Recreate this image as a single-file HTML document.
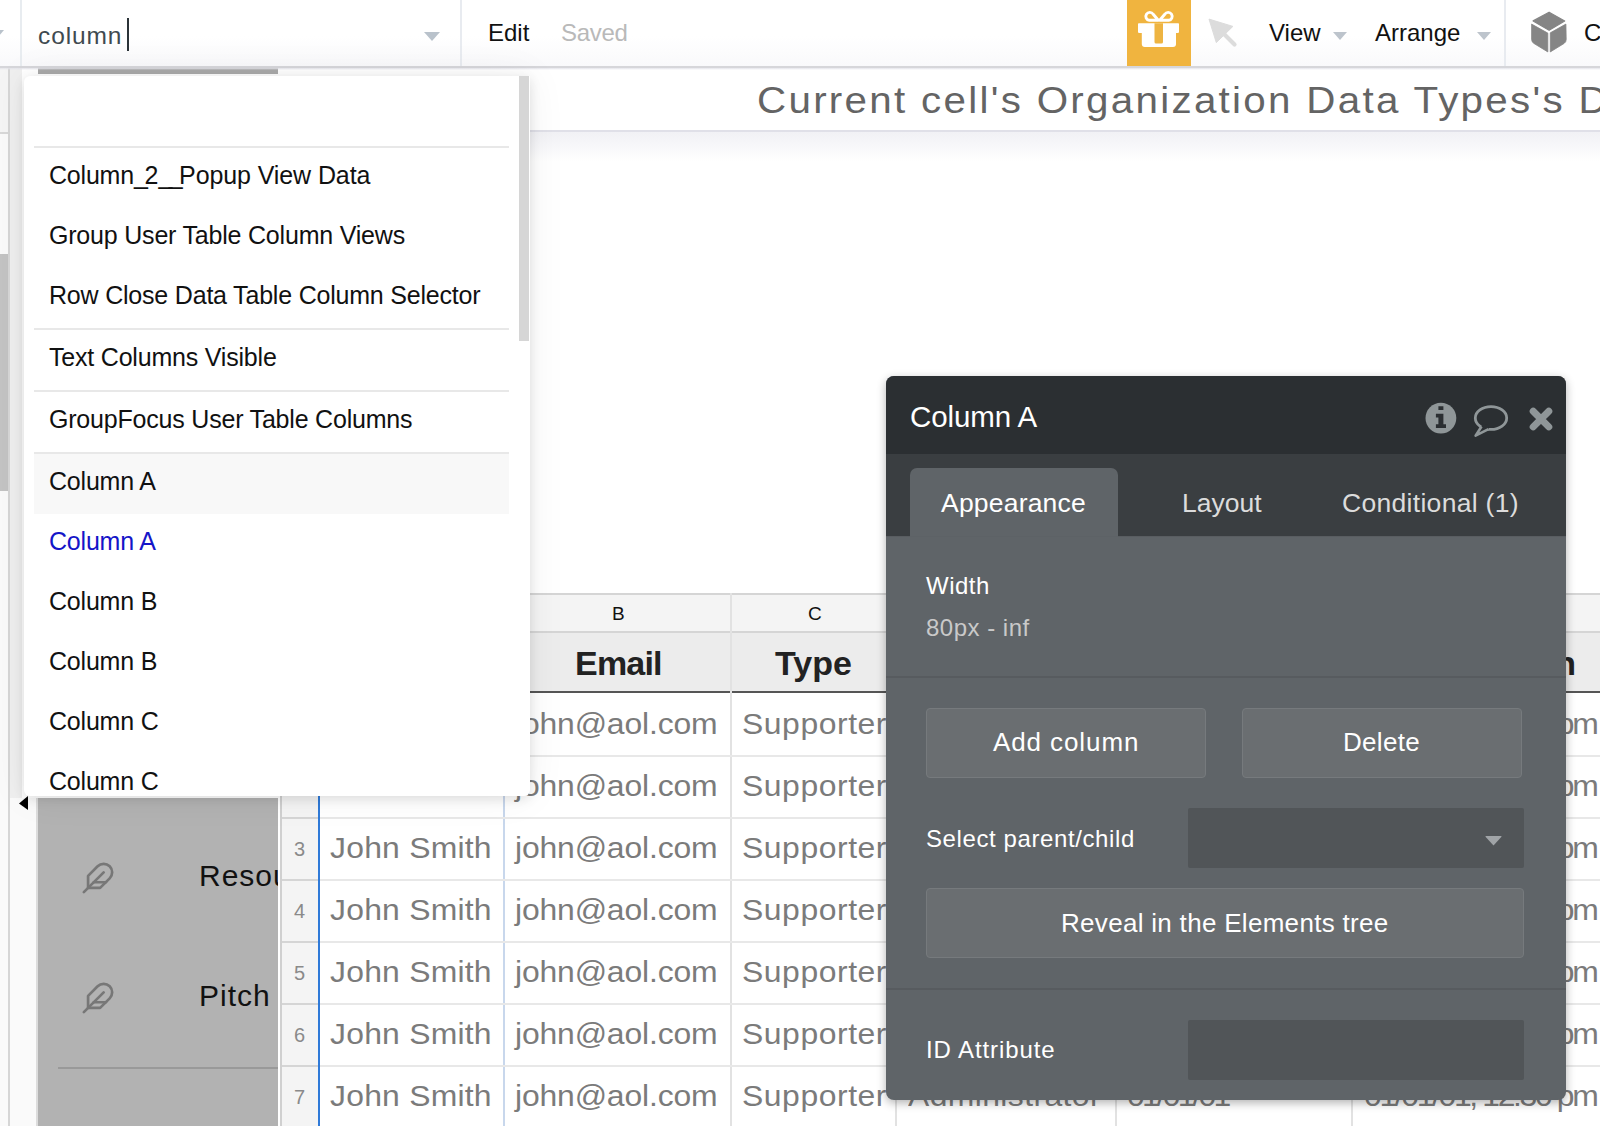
<!DOCTYPE html>
<html><head><meta charset="utf-8">
<style>
*{box-sizing:border-box;margin:0;padding:0}
html,body{width:1600px;height:1126px;overflow:hidden;background:#fff;font-family:"Liberation Sans",sans-serif}
.a{position:absolute}
.t{position:absolute;white-space:nowrap;line-height:1}
.dd .t{font-size:25px;color:#111;letter-spacing:-0.2px}
.sep{position:absolute;left:10px;width:475px;height:2px;background:#e8e8e8}
.row{position:absolute;left:280px;width:1320px;height:62px}
.cell{position:absolute;top:0;height:62px}
.rt{position:absolute;white-space:nowrap;line-height:1;font-size:29px;color:#7b7b7b;transform:scaleX(1.1);transform-origin:0 0}
.btn{position:absolute;background:#6a6e71;border:1px solid #767a7d;border-radius:4px}
.pt{position:absolute;white-space:nowrap;line-height:1;font-size:24px;color:#fff}
</style></head><body>

<!-- left strip -->
<div class="a" style="left:0;top:68px;width:8px;height:1058px;background:#fafafa"></div>
<div class="a" style="left:0;top:68px;width:8px;height:65px;background:#f5f5f5"></div>
<div class="a" style="left:0;top:132px;width:8px;height:2px;background:#d8d8d8"></div>
<div class="a" style="left:0;top:254px;width:8px;height:237px;background:#c3c3c3"></div>
<div class="a" style="left:8px;top:68px;width:2px;height:1058px;background:#d6d6d6"></div>
<div class="a" style="left:10px;top:68px;width:12px;height:730px;background:#efefef"></div>
<div class="a" style="left:10px;top:798px;width:26px;height:328px;background:#fafafa"></div>
<div class="a" style="left:36px;top:798px;width:2px;height:328px;background:#dcdcdc"></div>

<!-- gray left element -->
<div class="a" style="left:38px;top:68px;width:240px;height:6px;background:#aaaaaa"></div>
<div class="a" style="left:38px;top:798px;width:240px;height:328px;background:#b2b2b2"></div>
<svg class="a" style="left:81px;top:861px" width="34" height="34" viewBox="0 0 24 24" fill="none" stroke="#777" stroke-width="1.9" stroke-linecap="round" stroke-linejoin="round"><path d="M20.24 12.24a6 6 0 0 0-8.49-8.49L5 10.5V19h8.5z"/><line x1="16" y1="8" x2="2" y2="22"/><line x1="17.5" y1="15" x2="9" y2="15"/></svg>
<svg class="a" style="left:81px;top:981px" width="34" height="34" viewBox="0 0 24 24" fill="none" stroke="#777" stroke-width="1.9" stroke-linecap="round" stroke-linejoin="round"><path d="M20.24 12.24a6 6 0 0 0-8.49-8.49L5 10.5V19h8.5z"/><line x1="16" y1="8" x2="2" y2="22"/><line x1="17.5" y1="15" x2="9" y2="15"/></svg>
<div class="a" style="left:38px;top:798px;width:240px;height:328px;overflow:hidden">
  <div class="t m" style="left:161px;top:63px;font-size:30px;color:#111;letter-spacing:1px">Resources</div>
  <div class="t m" style="left:161px;top:183px;font-size:30px;color:#111;letter-spacing:1px">Pitch Deck</div>
</div>
<div class="a" style="left:58px;top:1067px;width:220px;height:2px;background:#999"></div>
<div class="a" style="left:278px;top:798px;width:2px;height:328px;background:#fff"></div>
<svg class="a" style="left:18px;top:795px" width="12" height="16" viewBox="0 0 12 16"><path d="M10 1 L1 8.5 L10 15 Z" fill="#000"/></svg>

<!-- canvas header bar -->
<div class="a" style="left:530px;top:130px;width:1070px;height:2px;background:#e0e0e8"></div>
<div class="a" style="left:530px;top:132px;width:1070px;height:30px;background:linear-gradient(#f1f1f5,rgba(255,255,255,0))"></div>
<div class="t m" style="left:757px;top:83px;font-size:36px;color:#646464;letter-spacing:2.05px;transform:scaleX(1.12);transform-origin:0 0">Current cell's Organization Data Types's Data</div>

<!-- TABLE -->
<div id="table">
<div class="a" style="left:280px;top:593px;width:1320px;height:2px;background:#d5d5d5"></div>
<div class="a" style="left:280px;top:595px;width:1320px;height:36px;background:#f4f4f4"></div>
<div class="a" style="left:280px;top:631px;width:1320px;height:2px;background:#d5d5d5"></div>
<div class="a" style="left:280px;top:633px;width:1320px;height:58px;background:#ececec"></div>
<div class="a" style="left:280px;top:691px;width:1320px;height:2px;background:#555"></div>
<!-- row-number col -->
<div class="a" style="left:280px;top:593px;width:2px;height:533px;background:#d0d0d0"></div>
<div class="a" style="left:282px;top:693px;width:36px;height:433px;background:#f4f4f4"></div>
<div class="a" style="left:318px;top:593px;width:2px;height:533px;background:#2f7ad8"></div>
<div class="a" style="left:503px;top:593px;width:2px;height:533px;background:#c8d7ec"></div>
<div class="a" style="left:730px;top:593px;width:2px;height:533px;background:#e2e2e2"></div>
<div class="a" style="left:895px;top:593px;width:2px;height:533px;background:#e2e2e2"></div>
<div class="a" style="left:1115px;top:593px;width:2px;height:533px;background:#e2e2e2"></div>
<div class="a" style="left:1351px;top:593px;width:2px;height:533px;background:#e2e2e2"></div>
<div class="t m" style="left:612px;top:604px;font-size:19px;color:#111">B</div>
<div class="t m" style="left:808px;top:604px;font-size:19px;color:#111">C</div>
<div class="t m" style="left:575px;top:646px;font-size:34px;font-weight:bold;color:#222;letter-spacing:-0.8px">Email</div>
<div class="t m" style="left:775px;top:646px;font-size:34px;font-weight:bold;color:#222">Type</div>
<div class="t m" style="right:24px;top:646px;font-size:34px;font-weight:bold;color:#222;text-align:right">Creation</div>
</div>
<div id="rows">
<div class="a" style="left:282px;top:755px;width:36px;height:2px;background:#d5d5d5"></div>
<div class="a" style="left:320px;top:755px;width:1280px;height:2px;background:#e8e8e8"></div>
<div class="rt m" style="left:294px;top:715px;font-size:20px;color:#8a8a8a;transform:none">1</div>
<div class="rt m" style="left:330px;top:710px;letter-spacing:0.2px">John Smith</div>
<div class="rt m" style="left:515px;top:710px;letter-spacing:-0.15px">john@aol.com</div>
<div class="rt m" style="left:742px;top:710px;letter-spacing:0.5px">Supporter</div>
<div class="rt m" style="left:908px;top:710px;letter-spacing:0.35px">Administrator</div>
<div class="rt m" style="left:1127px;top:710px;letter-spacing:-2.6px">01/01/01</div>
<div class="rt m" style="left:1364px;top:710px;letter-spacing:-2.15px">01/01/01, 12:30 pm</div>
<div class="a" style="left:282px;top:817px;width:36px;height:2px;background:#d5d5d5"></div>
<div class="a" style="left:320px;top:817px;width:1280px;height:2px;background:#e8e8e8"></div>
<div class="rt m" style="left:294px;top:777px;font-size:20px;color:#8a8a8a;transform:none">2</div>
<div class="rt m" style="left:330px;top:772px;letter-spacing:0.2px">John Smith</div>
<div class="rt m" style="left:515px;top:772px;letter-spacing:-0.15px">john@aol.com</div>
<div class="rt m" style="left:742px;top:772px;letter-spacing:0.5px">Supporter</div>
<div class="rt m" style="left:908px;top:772px;letter-spacing:0.35px">Administrator</div>
<div class="rt m" style="left:1127px;top:772px;letter-spacing:-2.6px">01/01/01</div>
<div class="rt m" style="left:1364px;top:772px;letter-spacing:-2.15px">01/01/01, 12:30 pm</div>
<div class="a" style="left:282px;top:879px;width:36px;height:2px;background:#d5d5d5"></div>
<div class="a" style="left:320px;top:879px;width:1280px;height:2px;background:#e8e8e8"></div>
<div class="rt m" style="left:294px;top:839px;font-size:20px;color:#8a8a8a;transform:none">3</div>
<div class="rt m" style="left:330px;top:834px;letter-spacing:0.2px">John Smith</div>
<div class="rt m" style="left:515px;top:834px;letter-spacing:-0.15px">john@aol.com</div>
<div class="rt m" style="left:742px;top:834px;letter-spacing:0.5px">Supporter</div>
<div class="rt m" style="left:908px;top:834px;letter-spacing:0.35px">Administrator</div>
<div class="rt m" style="left:1127px;top:834px;letter-spacing:-2.6px">01/01/01</div>
<div class="rt m" style="left:1364px;top:834px;letter-spacing:-2.15px">01/01/01, 12:30 pm</div>
<div class="a" style="left:282px;top:941px;width:36px;height:2px;background:#d5d5d5"></div>
<div class="a" style="left:320px;top:941px;width:1280px;height:2px;background:#e8e8e8"></div>
<div class="rt m" style="left:294px;top:901px;font-size:20px;color:#8a8a8a;transform:none">4</div>
<div class="rt m" style="left:330px;top:896px;letter-spacing:0.2px">John Smith</div>
<div class="rt m" style="left:515px;top:896px;letter-spacing:-0.15px">john@aol.com</div>
<div class="rt m" style="left:742px;top:896px;letter-spacing:0.5px">Supporter</div>
<div class="rt m" style="left:908px;top:896px;letter-spacing:0.35px">Administrator</div>
<div class="rt m" style="left:1127px;top:896px;letter-spacing:-2.6px">01/01/01</div>
<div class="rt m" style="left:1364px;top:896px;letter-spacing:-2.15px">01/01/01, 12:30 pm</div>
<div class="a" style="left:282px;top:1003px;width:36px;height:2px;background:#d5d5d5"></div>
<div class="a" style="left:320px;top:1003px;width:1280px;height:2px;background:#e8e8e8"></div>
<div class="rt m" style="left:294px;top:963px;font-size:20px;color:#8a8a8a;transform:none">5</div>
<div class="rt m" style="left:330px;top:958px;letter-spacing:0.2px">John Smith</div>
<div class="rt m" style="left:515px;top:958px;letter-spacing:-0.15px">john@aol.com</div>
<div class="rt m" style="left:742px;top:958px;letter-spacing:0.5px">Supporter</div>
<div class="rt m" style="left:908px;top:958px;letter-spacing:0.35px">Administrator</div>
<div class="rt m" style="left:1127px;top:958px;letter-spacing:-2.6px">01/01/01</div>
<div class="rt m" style="left:1364px;top:958px;letter-spacing:-2.15px">01/01/01, 12:30 pm</div>
<div class="a" style="left:282px;top:1065px;width:36px;height:2px;background:#d5d5d5"></div>
<div class="a" style="left:320px;top:1065px;width:1280px;height:2px;background:#e8e8e8"></div>
<div class="rt m" style="left:294px;top:1025px;font-size:20px;color:#8a8a8a;transform:none">6</div>
<div class="rt m" style="left:330px;top:1020px;letter-spacing:0.2px">John Smith</div>
<div class="rt m" style="left:515px;top:1020px;letter-spacing:-0.15px">john@aol.com</div>
<div class="rt m" style="left:742px;top:1020px;letter-spacing:0.5px">Supporter</div>
<div class="rt m" style="left:908px;top:1020px;letter-spacing:0.35px">Administrator</div>
<div class="rt m" style="left:1127px;top:1020px;letter-spacing:-2.6px">01/01/01</div>
<div class="rt m" style="left:1364px;top:1020px;letter-spacing:-2.15px">01/01/01, 12:30 pm</div>
<div class="a" style="left:282px;top:1127px;width:36px;height:2px;background:#d5d5d5"></div>
<div class="a" style="left:320px;top:1127px;width:1280px;height:2px;background:#e8e8e8"></div>
<div class="rt m" style="left:294px;top:1087px;font-size:20px;color:#8a8a8a;transform:none">7</div>
<div class="rt m" style="left:330px;top:1082px;letter-spacing:0.2px">John Smith</div>
<div class="rt m" style="left:515px;top:1082px;letter-spacing:-0.15px">john@aol.com</div>
<div class="rt m" style="left:742px;top:1082px;letter-spacing:0.5px">Supporter</div>
<div class="rt m" style="left:908px;top:1082px;letter-spacing:0.35px">Administrator</div>
<div class="rt m" style="left:1127px;top:1082px;letter-spacing:-2.6px">01/01/01</div>
<div class="rt m" style="left:1364px;top:1082px;letter-spacing:-2.15px">01/01/01, 12:30 pm</div>
</div>

<!-- TOP BAR -->
<div class="a" style="left:0;top:0;width:1600px;height:66px;background:linear-gradient(#fff 55%,#f9f9fb)"></div>
<div class="a" style="left:0;top:66px;width:1600px;height:2px;background:#d6d6da"></div>
<div class="a" style="left:0;top:68px;width:1600px;height:2px;background:linear-gradient(#e4e4ea,rgba(240,240,245,0))"></div>
<div class="a" style="left:20px;top:0;width:2px;height:66px;background:#e8ecf0"></div>
<svg class="a" style="left:0;top:30px" width="5" height="6"><path d="M-6 0H4L-1 6Z" fill="#b9c2cb"/></svg>
<div class="a" style="left:460px;top:0;width:2px;height:66px;background:#e8ebf0"></div>
<div class="a" style="left:1504px;top:0;width:2px;height:66px;background:#e8ebf0"></div>
<div class="t m" style="left:38px;top:24px;font-size:24.5px;color:#3f4a50;letter-spacing:0.9px">column</div>
<div class="a" style="left:127px;top:18px;width:2px;height:33px;background:#2b3338"></div>
<svg class="a" style="left:424px;top:32px" width="16" height="9"><path d="M0 0H16L8 9Z" fill="#b9c2cb"/></svg>
<div class="t m" style="left:488px;top:21px;font-size:24px;color:#111">Edit</div>
<div class="t m" style="left:561px;top:21px;font-size:24px;color:#b9b9b9;letter-spacing:-0.3px">Saved</div>
<div class="a" style="left:1127px;top:0;width:64px;height:66px;background:#f0b43f"></div>
<svg class="a" style="left:1127px;top:0" width="64" height="66" viewBox="1127 0 64 66">
<rect x="1138" y="23.2" width="41" height="9.7" rx="0.8" fill="#fff"/>
<path d="M1141.8 32.9H1176V44a3 3 0 0 1-3 3H1144.8a3 3 0 0 1-3-3Z" fill="#fff"/>
<path d="M1154.5 23.2H1163V42a1.5 1.5 0 0 1-1.5 1.5H1156a1.5 1.5 0 0 1-1.5-1.5Z" fill="#eeb441"/>
<path d="M1158.3 20.3 L1153.2 14.2 A4 4 0 1 0 1149.3 20.3 Z" fill="none" stroke="#fff" stroke-width="2.9" stroke-linejoin="round"/>
<path d="M1159.7 20.3 L1164.8 14.2 A4 4 0 1 1 1168.7 20.3 Z" fill="none" stroke="#fff" stroke-width="2.9" stroke-linejoin="round"/>
</svg>
<svg class="a" style="left:1200px;top:10px" width="50" height="45" viewBox="1200 10 50 45">
<path d="M1209 19.1 L1232.9 26.4 L1216.3 42.6 Z" fill="#dcdcdc" stroke="#dcdcdc" stroke-width="1" stroke-linejoin="round"/>
<line x1="1222" y1="32" x2="1234.5" y2="44.5" stroke="#dcdcdc" stroke-width="4.2" stroke-linecap="round"/>
</svg>
<svg class="a" style="left:1525px;top:8px" width="48" height="48" viewBox="1525 8 48 48">
<path d="M1533.1 20.9 L1549.1 12.2 L1564.7 20.9 L1549.1 30.3 Z" fill="#858585" stroke="#858585" stroke-width="1.2" stroke-linejoin="round"/>
<path d="M1531.6 24.1 L1547.8 33.1 L1547.8 51.9 L1534 43.5 Q1531.6 42 1531.6 39.5 Z" fill="#858585" stroke="#858585" stroke-width="0.8" stroke-linejoin="round"/>
<path d="M1565.9 24.1 L1550.3 32.8 L1550.3 51.9 L1564 43.5 Q1566.2 42 1566.2 39.5 Z" fill="#858585" stroke="#858585" stroke-width="0.8" stroke-linejoin="round"/>
</svg>
<div class="t m" style="left:1269px;top:21px;font-size:24px;color:#111">View</div>
<svg class="a" style="left:1333px;top:32px" width="14" height="8"><path d="M0 0H14L7 8Z" fill="#bdc4cc"/></svg>
<div class="t m" style="left:1375px;top:21px;font-size:24px;color:#111">Arrange</div>
<svg class="a" style="left:1477px;top:32px" width="14" height="8"><path d="M0 0H14L7 8Z" fill="#bdc4cc"/></svg>
<div class="t m" style="left:1584px;top:21px;font-size:24px;color:#111">C</div>

<!-- DROPDOWN -->
<div class="a dd" style="left:24px;top:76px;width:506px;height:720px;background:#fff;border-radius:6px 0 6px 6px;box-shadow:0 3px 12px rgba(0,0,0,.11),0 0 40px rgba(0,0,0,.06);overflow:hidden">
  <div class="a" style="left:495px;top:0;width:10px;height:265px;background:#d6d6d6"></div>
  <div class="sep" style="top:70px"></div>
  <div class="t m" style="left:25px;top:87px">Column<span style="letter-spacing:-3.3px">_</span><span style="letter-spacing:0">2</span><span style="letter-spacing:-3.6px">__</span><span style="letter-spacing:-0.1px">Popup View Data</span></div>
  <div class="t m" style="left:25px;top:147px">Group User Table Column Views</div>
  <div class="t m" style="left:25px;top:207px">Row Close Data Table Column Selector</div>
  <div class="sep" style="top:252px"></div>
  <div class="t m" style="left:25px;top:269px">Text Columns Visible</div>
  <div class="sep" style="top:314px"></div>
  <div class="t m" style="left:25px;top:331px">GroupFocus User Table Columns</div>
  <div class="sep" style="top:376px"></div>
  <div class="a" style="left:10px;top:378px;width:475px;height:60px;background:#f8f8f8"></div>
  <div class="t m" style="left:25px;top:393px">Column A</div>
  <div class="t m" style="left:25px;top:453px;color:#1515c8">Column A</div>
  <div class="t m" style="left:25px;top:513px">Column B</div>
  <div class="t m" style="left:25px;top:573px">Column B</div>
  <div class="t m" style="left:25px;top:633px">Column C</div>
  <div class="t m" style="left:25px;top:693px">Column C</div>
</div>

<!-- PROPERTY PANEL -->
<div class="a" style="left:886px;top:376px;width:680px;height:724px;background:#5f6468;border-radius:8px;overflow:hidden;box-shadow:0 3px 10px rgba(0,0,0,.3)">
  <div class="a" style="left:0;top:0;width:680px;height:78px;background:#2b2f32"></div>
  <div class="a" style="left:0;top:78px;width:680px;height:82px;background:#3a3e41"></div>
  <div class="a" style="left:24px;top:92px;width:208px;height:68px;background:#5f6468;border-radius:7px 7px 0 0"></div>
  <svg class="a" style="left:530px;top:20px" width="150" height="50" viewBox="1416 396 150 50">
  <circle cx="1440.9" cy="418.1" r="15.4" fill="#8f9698"/>
  <path d="M1438.4 406.2h5v3.7h-5z M1435.9 413.8h7.5v10.5h2.6v3.7h-10.1v-3.7h2.5v-6.8h-2.5z" fill="#2b2f32"/>
  <ellipse cx="1491" cy="418" rx="15.7" ry="11.4" fill="none" stroke="#8f9698" stroke-width="2.8"/>
  <path d="M1481.5 426.5 L1482.5 423 L1489 425.5 L1488.5 429.2 L1475.6 435.7 Z" fill="#2b2f32"/><path d="M1481.5 426.5 L1475.6 435.7 L1488.5 429.2" fill="none" stroke="#8f9698" stroke-width="2.6" stroke-linejoin="round"/>
  <path d="M1533.2 411.3 L1548.8 426.9 M1548.8 411.3 L1533.2 426.9" stroke="#8f9698" stroke-width="7" stroke-linecap="round"/>
  </svg>
  <div class="pt m" style="left:24px;top:26px;font-size:29.5px;letter-spacing:-0.1px">Column A</div>
  <div class="pt m" style="left:55px;top:114px;font-size:26.5px;letter-spacing:0.2px">Appearance</div>
  <div class="pt m" style="left:296px;top:114px;font-size:26.5px;color:#dcdcdc">Layout</div>
  <div class="pt m" style="left:456px;top:114px;font-size:26.5px;color:#dcdcdc;letter-spacing:0.3px">Conditional (1)</div>
  <div class="a" style="left:0;top:160px;width:24px;height:1px;background:#595d61"></div>
  <div class="a" style="left:232px;top:160px;width:448px;height:1px;background:#595d61"></div>
  <div class="a" style="left:24px;top:160px;width:208px;height:1px;background:#5d6266"></div>
  <div class="pt m" style="left:40px;top:198px;letter-spacing:0.5px">Width</div>
  <div class="pt m" style="left:40px;top:240px;color:#c9c9c9;letter-spacing:0.5px">80px - inf</div>
  <div class="a" style="left:0;top:300px;width:680px;height:2px;background:#575b5f"></div>
  <div class="btn" style="left:40px;top:332px;width:280px;height:70px"></div>
  <div class="btn" style="left:356px;top:332px;width:280px;height:70px"></div>
  <div class="pt m" style="left:107px;top:353px;font-size:26px;letter-spacing:0.9px">Add column</div>
  <div class="pt m" style="left:457px;top:353px;font-size:26px;letter-spacing:0.3px">Delete</div>
  <div class="pt m" style="left:40px;top:451px;letter-spacing:0.6px">Select parent/child</div>
  <div class="a" style="left:302px;top:432px;width:336px;height:60px;background:#515558;border-radius:2px"></div>
  <svg class="a" style="left:599px;top:460px" width="17" height="10"><path d="M1 0H16Q17 0 16.3 1L8.5 9.5L0.7 1Q0 0 1 0Z" fill="#a0a4a7"/></svg>
  <div class="btn" style="left:40px;top:512px;width:598px;height:70px"></div>
  <div class="pt m" style="left:175px;top:534px;font-size:26px;letter-spacing:0.3px">Reveal in the Elements tree</div>
  <div class="a" style="left:0;top:612px;width:680px;height:2px;background:#575b5f"></div>
  <div class="pt m" style="left:40px;top:662px;letter-spacing:0.9px">ID Attribute</div>
  <div class="a" style="left:302px;top:644px;width:336px;height:60px;background:#515558;border-radius:2px"></div>
</div>
</body></html>
